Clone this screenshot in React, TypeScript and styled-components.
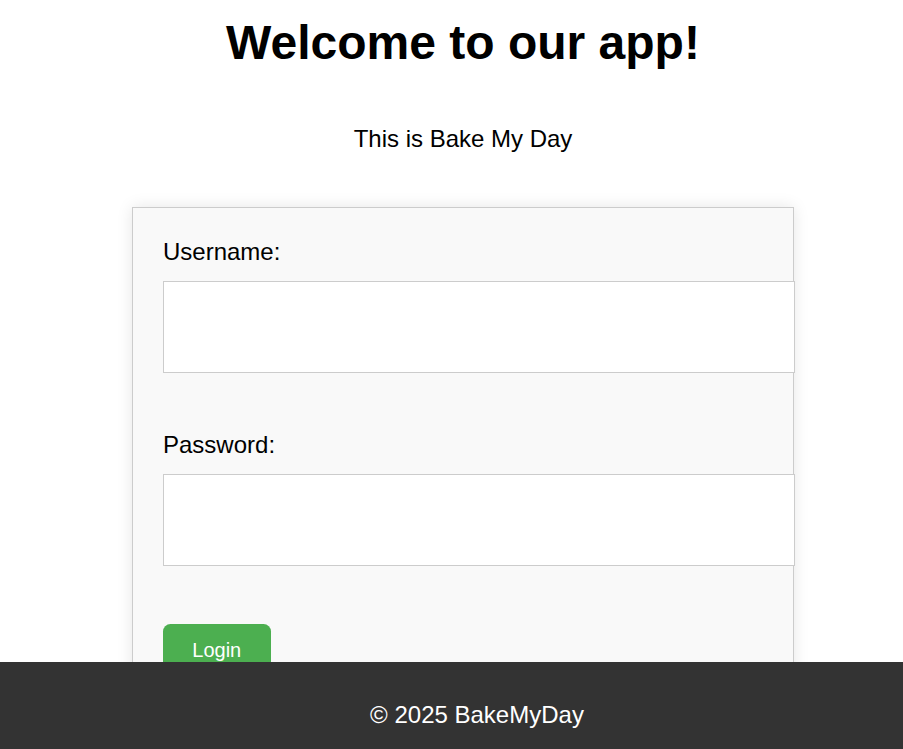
import React from "react";
import styled, { createGlobalStyle } from "styled-components";

const GlobalStyle = createGlobalStyle`
  html, body {
    margin: 0;
    padding: 0;
    background: #ffffff;
    font-family: "Liberation Sans", Arial, sans-serif;
    color: #000000;
  }
  * { box-sizing: content-box; }
`;

const Main = styled.main`
  display: flex;
  flex-direction: column;
  align-items: center;
  padding-left: 23px;
`;

const Title = styled.h1`
  margin: 15px 0 0;
  font-size: 48px;
  font-weight: 700;
  line-height: normal;
  text-align: center;
`;

const Subtitle = styled.p`
  margin: 55px 0 0;
  font-size: 24px;
  line-height: normal;
  text-align: center;
`;

const Card = styled.form`
  margin-top: 54.4px;
  width: 600px;
  padding: 30px;
  background: #f9f9f9;
  border: 1px solid #cccccc;
  box-shadow: 0 0 15px rgba(0, 0, 0, 0.1);
  display: flex;
  flex-direction: column;
  align-items: flex-start;
`;

const Label = styled.label`
  display: block;
  font-size: 24px;
  line-height: normal;
  margin-bottom: 15px;
`;

const Input = styled.input`
  display: block;
  width: 100%;
  height: 60px;
  padding: 15px;
  margin: 0 0 57.6px;
  border: 1px solid #cccccc;
  background: #ffffff;
  font-family: "Liberation Sans", Arial, sans-serif;
  font-size: 20px;
  outline: none;
`;

const Button = styled.button`
  padding: 15px 29.3px;
  border: none;
  border-radius: 7.5px;
  background: #4caf50;
  color: #ffffff;
  font-family: "Liberation Sans", Arial, sans-serif;
  font-size: 20px;
  line-height: normal;
  cursor: pointer;
`;

const Footer = styled.footer`
  position: fixed;
  left: 0;
  right: 0;
  bottom: 0;
  height: 87px;
  box-sizing: border-box;
  padding: 38.6px 0 0 51px;
  background: #333333;
  color: #ffffff;
  font-size: 24px;
  line-height: normal;
  text-align: center;
`;

export default function App() {
  return (
    <>
      <GlobalStyle />
      <Main>
        <Title>Welcome to our app!</Title>
        <Subtitle>This is Bake My Day</Subtitle>
        <Card onSubmit={(e) => e.preventDefault()}>
          <Label htmlFor="username">Username:</Label>
          <Input id="username" type="text" />
          <Label htmlFor="password">Password:</Label>
          <Input id="password" type="password" />
          <Button type="submit">Login</Button>
        </Card>
      </Main>
      <Footer>© 2025 BakeMyDay</Footer>
    </>
  );
}
